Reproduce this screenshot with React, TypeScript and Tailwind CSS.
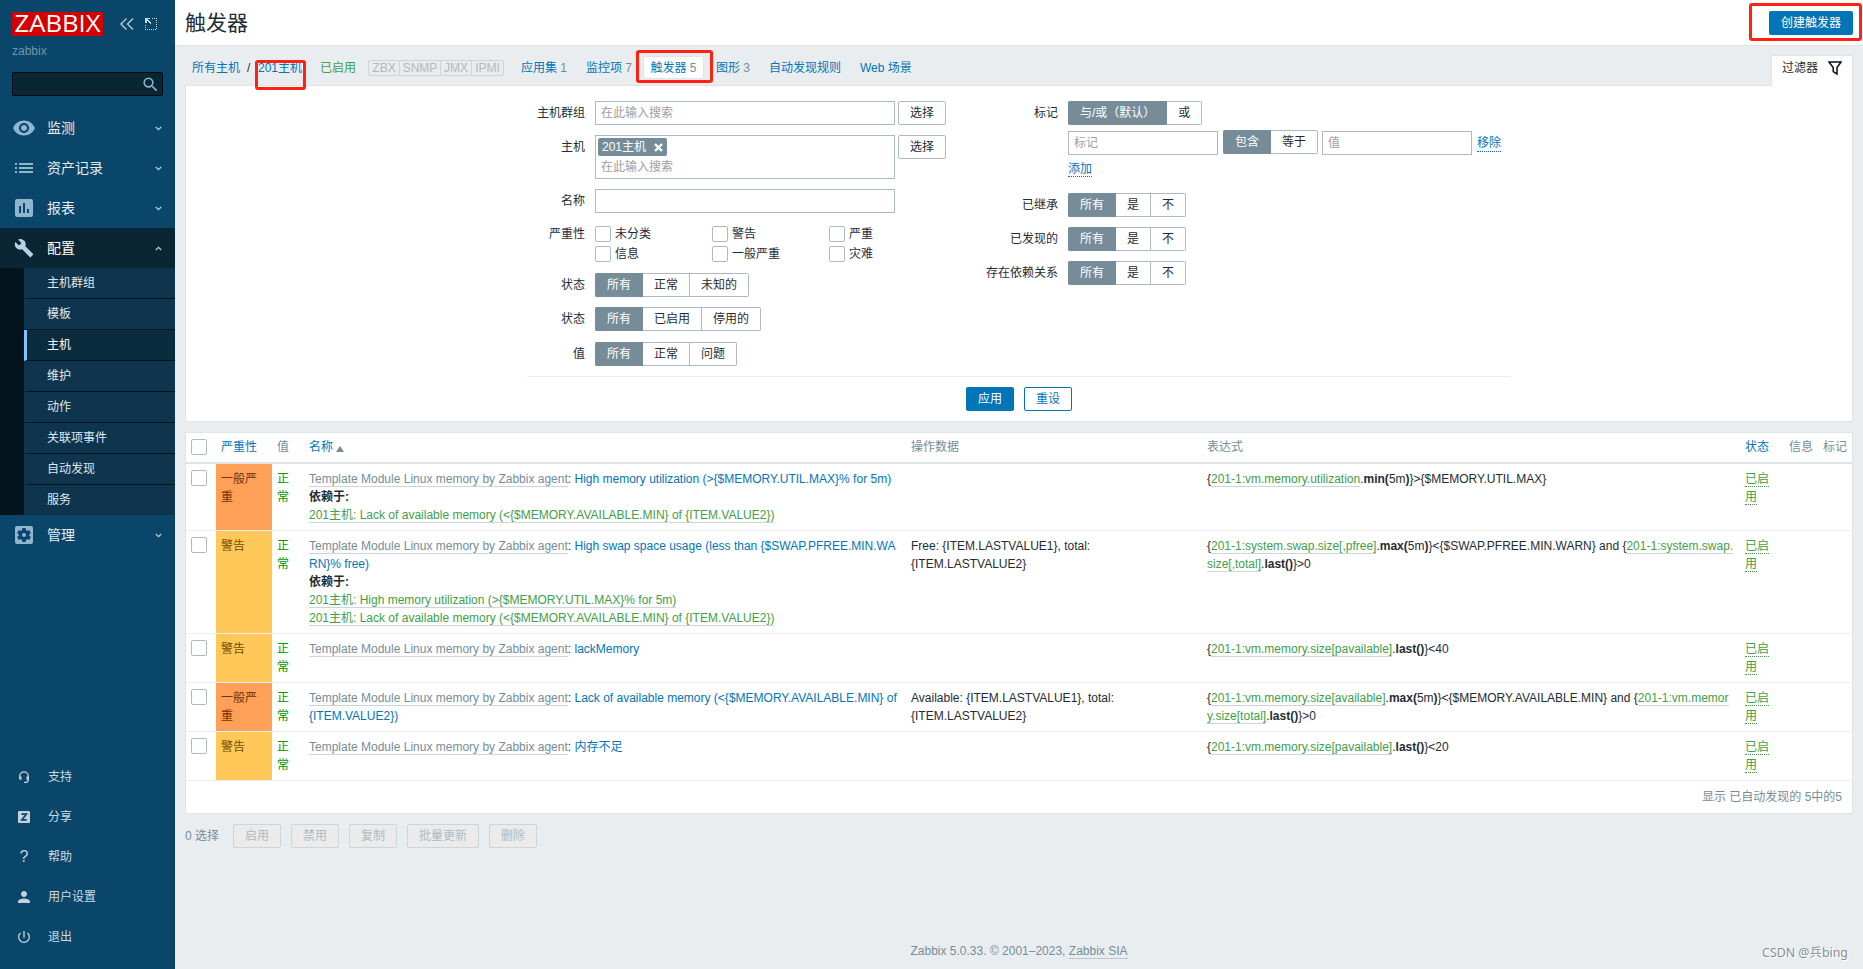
import React from 'react';
import clsx from 'clsx';
import {
  MdBuild,
  MdInsertChart,
  MdList,
  MdPerson,
  MdPowerSettingsNew,
  MdSearch,
  MdSettingsApplications,
  MdVisibility,
} from 'react-icons/md';

const submenu = ['主机群组', '模板', '主机', '维护', '动作', '关联项事件', '自动发现', '服务'];

const Chevron: React.FC<{ up?: boolean }> = ({ up }) => (
  <svg width="7" height="5" viewBox="0 0 7 5" fill="none" stroke="currentColor" strokeWidth="1.2">
    <path d={up ? 'M0.8 4 3.5 1.3 6.2 4' : 'M0.8 1 3.5 3.7 6.2 1'} />
  </svg>
);

const MenuItem: React.FC<{ icon: React.ReactNode; label: string; active?: boolean }> = ({ icon, label, active }) => (
  <div
    className={clsx(
      'flex h-10 items-center pl-3 pr-[13px] text-sm',
      active ? 'bg-[#0a2635] text-white' : 'text-[#e3edf3]'
    )}
  >
    <span className={clsx('flex w-[35px] items-center', active ? 'text-[#b4d3e8]' : 'text-[#8fb5cf]')}>{icon}</span>
    <span className="flex-1">{label}</span>
    <span className="text-[#b9d0de]">
      <Chevron up={active} />
    </span>
  </div>
);

const FootItem: React.FC<{ icon: React.ReactNode; label: string }> = ({ icon, label }) => (
  <div className="flex h-10 items-center pl-[14px] text-[#cbdbe4]">
    <span className="mr-[14px] flex w-5 items-center justify-center text-[#c0d2dd]">{icon}</span>
    {label}
  </div>
);

const Sidebar: React.FC = () => (
  <aside className="flex h-full w-[175px] shrink-0 flex-col bg-[#0a466a]">
    <div className="flex h-6 mt-3 ml-3 items-center">
      <svg className="overflow-visible" width="91" height="24" viewBox="0 0 91 24">
        <rect width="91" height="24" fill="#d40000" />
        <text
          x="2.5"
          y="20.3"
          fill="#fff"
          fontFamily="'Open Sans', sans-serif"
          fontSize="24"
          textLength="86"
          lengthAdjust="spacingAndGlyphs"
        >
          ZABBIX
        </text>
      </svg>
      <svg className="ml-[17px]" width="14" height="12" viewBox="0 0 14 12" fill="none" stroke="#b5cddb" strokeWidth="1.4">
        <path d="M6.5 0.5 1 6l5.5 5.5M13 0.5 7.5 6l5.5 5.5" />
      </svg>
      <svg className="ml-[11px]" width="12" height="12" viewBox="0 0 12 12" fill="#c5d8e3" shapeRendering="crispEdges">
        <path d="M7 .5h5M11.5 2v10M0 11.5h12M.5 7v5" fill="none" stroke="#c5d8e3" strokeDasharray="1 1" />
        <path d="M0 0h5v1H3v1h1v1h1v1h1v2H5V5H4V4H3V3H2v2H0z" />
      </svg>
    </div>
    <div className="ml-3 mt-[6px] h-[18px] text-[#7295aa] leading-[18px]">zabbix</div>
    <div className="mx-3 mt-3 flex h-6 w-[151px] items-center justify-end rounded-xs border border-black/70 bg-[#0a2635] pr-[2px] text-[#8fb0c4]">
      <MdSearch size={19} />
    </div>

    <nav className="mt-3">
      <MenuItem icon={<MdVisibility size={24} />} label="监测" />
      <MenuItem icon={<MdList size={24} />} label="资产记录" />
      <MenuItem icon={<MdInsertChart size={24} />} label="报表" />
      <MenuItem icon={<MdBuild size={20} className="ml-[2px]" />} label="配置" active />
      <ul className="bg-[#04141d] pl-6">
        {submenu.map((label, i) => (
          <li
            key={label}
            className={clsx(
              'flex items-center pl-[20px] border-l-3',
              i === submenu.length - 1 ? 'h-[30px]' : 'h-[31px] border-b border-b-[#04141d]',
              label === '主机' ? 'border-l-[#7fc4ff] bg-[#0a2c3f] text-white' : 'border-l-[#0f344d] bg-[#0f344d] text-[#dfe9ef]'
            )}
          >
            {label}
          </li>
        ))}
      </ul>
      <MenuItem icon={<MdSettingsApplications size={24} />} label="管理" />
    </nav>

    <div className="mt-auto mb-3">
      <FootItem
        icon={
          <svg width="12" height="12" viewBox="0 0 12 12" fill="none" stroke="currentColor" strokeWidth="1.3">
            <path d="M1.7 7V5.2a4.3 4.3 0 0 1 8.6 0V9.5L8.8 11.3H6" />
            <path d="M2.4 5.4v3.4M9.6 5.4v3.4" strokeWidth="2.2" />
          </svg>
        }
        label="支持"
      />
      <FootItem
        icon={
          <svg width="12" height="12" viewBox="0 0 12 12">
            <rect width="12" height="12" rx="1" fill="currentColor" />
            <path d="M3.5 3.1h5L3.7 8.9h5" fill="none" stroke="#0a466a" strokeWidth="1.6" />
          </svg>
        }
        label="分享"
      />
      <FootItem icon={<span className="text-[16px] leading-none">?</span>} label="帮助" />
      <FootItem icon={<MdPerson size={18} />} label="用户设置" />
      <FootItem icon={<MdPowerSettingsNew size={16} />} label="退出" />
    </div>
  </aside>
);

const TabLink: React.FC<{ label: string; count?: number; className?: string }> = ({ label, count, className }) => (
  <span className={clsx('whitespace-nowrap text-[#0275b8]', className)}>
    {label}
    {count !== undefined && <span className="text-[#768d99]"> {count}</span>}
  </span>
);

const HostNav: React.FC = () => (
  <div className="flex h-[39px] items-start pl-[7px]">
    <div className="mt-[11px] flex h-[21px] items-center">
      <TabLink label="所有主机" className="w-[55px]" />
      <span className="w-[11px]">/</span>
      <span className="relative w-[62px]">
        <TabLink label="201主机" />
        <span className="absolute -left-[3px] top-px h-[30px] w-[51px] rounded-[3px] border-3 border-[#ff2213]" />
      </span>
      <span className="w-12 text-[#429e47]">已启用</span>
      <span className="flex h-4 w-[153px] text-[#acbbc2]">
        <span className="flex w-8 items-center justify-center rounded-l-xs border border-[#ccd5d9] bg-[#ebebeb]">ZBX</span>
        <span className="flex w-[41px] items-center justify-center border-y border-r border-[#ccd5d9] bg-[#ebebeb]">SNMP</span>
        <span className="flex w-[31px] items-center justify-center border-y border-r border-[#ccd5d9] bg-[#ebebeb]">JMX</span>
        <span className="flex w-8 items-center justify-center rounded-r-xs border-y border-r border-[#ccd5d9] bg-[#ebebeb]">IPMI</span>
      </span>
      <TabLink label="应用集" count={1} className="w-[65px]" />
      <TabLink label="监控项" count={7} className="w-[58px]" />
      <span className="relative flex h-[21px] w-[59px] items-center justify-center rounded-xs bg-white shadow-[0_0_1px_1px_#dfe4e7]">
        <TabLink label="触发器" count={5} />
        <span className="absolute -left-[8px] -top-[7px] h-[33px] w-[77px] rounded-[3px] border-3 border-[#ff2213]" />
      </span>
      <TabLink label="图形" count={3} className="ml-[13px] w-[53px]" />
      <TabLink label="自动发现规则" className="w-[91px]" />
      <TabLink label="Web 场景" />
    </div>
    {/* Filter tab overlaps the panel border below */}
    <div className="relative z-10 mt-[9px] ml-auto flex h-[31px] w-[82px] items-center border border-b-0 border-[#dfe4e7] bg-white pl-[10px] pb-[6px]">
      过滤器
      <svg className="ml-[10px]" width="14" height="14" viewBox="0 0 14 14" fill="none" stroke="#111" strokeWidth="1.5">
        <path d="M1 1h12L9 6.6V13L5.2 10.6V6.6z" />
      </svg>
    </div>
  </div>
);

const FieldRow: React.FC<{ label: string; className?: string; children: React.ReactNode }> = ({
  label,
  className,
  children,
}) => (
  <div className={clsx('flex items-start', className)}>
    <div className="mr-[10px] flex h-6 w-[104px] items-center justify-end">{label}</div>
    {children}
  </div>
);

const Segmented: React.FC<{ options: string[]; className?: string }> = ({ options, className }) => (
  <div className={clsx('flex h-6', className)}>
    {options.map((option, i) => (
      <span
        key={option}
        className={clsx(
          'flex items-center border-y whitespace-nowrap',
          i === 0
            ? 'rounded-l-xs border-l border-[#768d99] bg-[#768d99] pl-[11px] pr-3 text-white'
            : 'border-r border-[#acbbc2] bg-white pl-[11px] pr-[11px]',
          i === options.length - 1 && 'rounded-r-xs'
        )}
      >
        {option}
      </span>
    ))}
  </div>
);

const SelectButton: React.FC = () => (
  <span className="ml-[3px] flex h-6 w-12 items-center justify-center rounded-xs border border-[#acbbc2]">选择</span>
);

const Checkbox: React.FC = () => (
  <span className="block h-4 w-4 shrink-0 rounded-xs border border-[#acbbc2] bg-white" />
);

const Filter: React.FC = () => (
  <section className="h-[337px] border border-[#dfe4e7] bg-white pt-[15px]">
    <div className="ml-[295px] flex h-[265px]">
      <div className="w-[473px]">
        <FieldRow label="主机群组">
          <div className="flex h-6 w-[300px] items-center border border-[#acbbc2] pl-[5px] text-[#a0a0a0]">在此输入搜索</div>
          <SelectButton />
        </FieldRow>
        <FieldRow label="主机" className="mt-[10px]">
          <div className="h-11 w-[300px] border border-[#acbbc2] pt-[2px] pl-[2px]">
            <div className="flex h-[18px] w-[69px] items-center rounded-xs bg-[#768d99] pl-1 text-white">
              201主机
              <svg className="ml-[8px]" width="9" height="9" viewBox="0 0 9 9" stroke="#fff" strokeWidth="2.4">
                <path d="M1 1l7 7M8 1 1 8" />
              </svg>
            </div>
            <div className="pl-[3px] text-[#a0a0a0] leading-[22px]">在此输入搜索</div>
          </div>
          <SelectButton />
        </FieldRow>
        <FieldRow label="名称" className="mt-[10px]">
          <div className="h-6 w-[300px] border border-[#acbbc2]" />
        </FieldRow>
        <FieldRow label="严重性" className="mt-[9px]">
          <div className="mt-[2px] grid grid-cols-[117px_117px_117px]">
            {['未分类', '警告', '严重', '信息', '一般严重', '灾难'].map((name) => (
              <span key={name} className="flex h-5 items-center gap-1">
                <Checkbox />
                {name}
              </span>
            ))}
          </div>
        </FieldRow>
        <FieldRow label="状态" className="mt-[9px]">
          <Segmented options={['所有', '正常', '未知的']} />
        </FieldRow>
        <FieldRow label="状态" className="mt-[10px]">
          <Segmented options={['所有', '已启用', '停用的']} />
        </FieldRow>
        <FieldRow label="值" className="mt-[11px]">
          <Segmented options={['所有', '正常', '问题']} />
        </FieldRow>
      </div>

      <div>
        <FieldRow label="标记">
          <div>
            <Segmented options={['与/或（默认）', '或']} />
            <div className="mt-[5px] flex h-[25px] items-end">
              <span className="flex h-6 w-[150px] items-center border border-[#acbbc2] pl-[5px] text-[#a0a0a0]">标记</span>
              <Segmented options={['包含', '等于']} className="ml-[5px] mb-px" />
              <span className="ml-[4px] flex h-6 w-[150px] items-center border border-[#acbbc2] pl-[5px] text-[#a0a0a0]">值</span>
              <span className="mb-[3px] ml-[5px] border-b border-dotted border-[#0275b8] leading-[15px] text-[#0275b8]">移除</span>
            </div>
            <div className="mt-[5px] h-[33px]">
              <span className="border-b border-dotted border-[#0275b8] leading-[18px] text-[#0275b8]">添加</span>
            </div>
          </div>
        </FieldRow>
        <FieldRow label="已继承">
          <Segmented options={['所有', '是', '不']} />
        </FieldRow>
        <FieldRow label="已发现的" className="mt-[10px]">
          <Segmented options={['所有', '是', '不']} />
        </FieldRow>
        <FieldRow label="存在依赖关系" className="mt-[10px]">
          <Segmented options={['所有', '是', '不']} />
        </FieldRow>
      </div>
    </div>
    <div className="mx-auto mt-[10px] flex w-[984px] justify-center gap-[10px] border-t border-[#ebeef0] pt-[10px]">
      <span className="flex h-6 w-12 items-center justify-center rounded-xs bg-[#0275b8] text-white">应用</span>
      <span className="flex h-6 w-12 items-center justify-center rounded-xs border border-[#0275b8] text-[#0275b8]">重设</span>
    </div>
  </section>
);

const Green: React.FC<{ children: React.ReactNode }> = ({ children }) => (
  <span className="border-b border-[#ccd5d9] text-[#429e47]">{children}</span>
);

interface Trigger {
  severity: '一般严重' | '警告';
  name: React.ReactNode;
  dependsOn?: string[];
  data?: React.ReactNode;
  expression: React.ReactNode;
}

const triggers: Trigger[] = [
  {
    severity: '一般严重',
    name: 'High memory utilization (>{$MEMORY.UTIL.MAX}% for 5m)',
    dependsOn: ['201主机: Lack of available memory (<{$MEMORY.AVAILABLE.MIN} of {ITEM.VALUE2})'],
    expression: (
      <>
        {'{'}<Green>201-1:vm.memory.utilization</Green>.<b>min(</b>5m<b>)</b>{'}>{$MEMORY.UTIL.MAX}'}
      </>
    ),
  },
  {
    severity: '警告',
    name: <>{'High swap space usage (less than {$SWAP.PFREE.MIN.WA'}<br />{'RN}% free)'}</>,
    dependsOn: [
      '201主机: High memory utilization (>{$MEMORY.UTIL.MAX}% for 5m)',
      '201主机: Lack of available memory (<{$MEMORY.AVAILABLE.MIN} of {ITEM.VALUE2})',
    ],
    data: <>{'Free: {ITEM.LASTVALUE1}, total:'}<br />{'{ITEM.LASTVALUE2}'}</>,
    expression: (
      <>
        {'{'}<Green>201-1:system.swap.size[,pfree]</Green>.<b>max(</b>5m<b>)</b>
        {'}<{$SWAP.PFREE.MIN.WARN} and {'}<Green>201-1:system.swap.<br />size[,total]</Green>.<b>last()</b>{'}>0'}
      </>
    ),
  },
  {
    severity: '警告',
    name: 'lackMemory',
    expression: <>{'{'}<Green>201-1:vm.memory.size[pavailable]</Green>.<b>last()</b>{'}<40'}</>,
  },
  {
    severity: '一般严重',
    name: <>{'Lack of available memory (<{$MEMORY.AVAILABLE.MIN} of'}<br />{'{ITEM.VALUE2})'}</>,
    data: <>{'Available: {ITEM.LASTVALUE1}, total:'}<br />{'{ITEM.LASTVALUE2}'}</>,
    expression: (
      <>
        {'{'}<Green>201-1:vm.memory.size[available]</Green>.<b>max(</b>5m<b>)</b>
        {'}<{$MEMORY.AVAILABLE.MIN} and {'}<Green>201-1:vm.memor<br />y.size[total]</Green>.<b>last()</b>{'}>0'}
      </>
    ),
  },
  {
    severity: '警告',
    name: '内存不足',
    expression: <>{'{'}<Green>201-1:vm.memory.size[pavailable]</Green>.<b>last()</b>{'}<20'}</>,
  },
];

const columns = 'grid grid-cols-[30px_56px_32px_602px_296px_538px_44px_34px_34px]';

const TriggerRow: React.FC<{ trigger: Trigger }> = ({ trigger }) => (
  <div className={clsx(columns, 'border-b border-[#ebeef0] leading-[18px] whitespace-nowrap *:py-[6px] *:pl-[5px]')}>
    <div>
      <Checkbox />
    </div>
    <div
      className={clsx(
        'pr-[5px] whitespace-normal',
        trigger.severity === '警告' ? 'bg-[#ffc859] text-[#734d00]' : 'bg-[#ffa059] text-[#733100]'
      )}
    >
      {trigger.severity}
    </div>
    <div className="text-[#009900]">正<br />常</div>
    <div>
      <span className="border-b border-[#ccd5d9] text-[#768d99]">Template Module Linux memory by Zabbix agent</span>
      {': '}
      <span className="text-[#0275b8]">{trigger.name}</span>
      {trigger.dependsOn && (
        <>
          <div className="font-bold">依赖于:</div>
          {trigger.dependsOn.map((dep) => (
            <div key={dep}>
              <Green>{dep}</Green>
            </div>
          ))}
        </>
      )}
    </div>
    <div>{trigger.data}</div>
    <div>{trigger.expression}</div>
    <div>
      <span className="border-b border-dotted border-[#429e47] text-[#429e47]">已启<br />用</span>
    </div>
    <div />
    <div />
  </div>
);

const TriggerTable: React.FC = () => (
  <section className="mt-[10px] border border-[#dfe4e7] bg-white">
    <div className={clsx(columns, 'h-[31px] items-center border-b-2 border-[#dfe4e7] pb-px text-[#768d99] *:pl-[5px]')}>
      <span>
        <Checkbox />
      </span>
      <span className="text-[#0275b8]">严重性</span>
      <span>值</span>
      <span className="flex items-center text-[#0275b8]">
        名称
        <svg className="ml-[3px] mt-[3px]" width="8" height="6" viewBox="0 0 8 6" fill="#768d99">
          <path d="M4 0 8 6H0z" />
        </svg>
      </span>
      <span>操作数据</span>
      <span>表达式</span>
      <span className="text-[#0275b8]">状态</span>
      <span>信息</span>
      <span>标记</span>
    </div>
    {triggers.map((trigger, i) => (
      <TriggerRow key={i} trigger={trigger} />
    ))}
    <div className="flex h-8 items-center justify-end pr-[10px] text-[#768d99]">显示 已自动发现的 5中的5</div>
  </section>
);

const actions = ['启用', '禁用', '复制', '批量更新', '删除'];

const App: React.FC = () => (
  <div className="flex h-[969px] w-[1863px] overflow-hidden bg-[#e9edf0] font-['Liberation_Sans','Noto_Sans_CJK_SC',sans-serif] text-[12px] leading-[18px] text-[#1f2c33]">
    <Sidebar />
    <main className="flex flex-1 flex-col">
      <header className="flex h-[46px] items-center justify-between border-b border-[#dfe4e7] bg-white px-[10px]">
        <h1 className="text-[21px] leading-6">触发器</h1>
        <div className="relative">
          <span className="flex h-6 w-[84px] items-center justify-center rounded-xs bg-[#0275b8] text-white">创建触发器</span>
          <span className="absolute -left-[20px] -top-[8px] h-[38px] w-[113px] rounded-[3px] border-3 border-[#ff2213]" />
        </div>
      </header>

      <div className="flex flex-1 flex-col pl-[10px] pr-[10px]">
        <HostNav />
        <Filter />
        <TriggerTable />
        <div className="mt-[10px] flex items-center gap-[10px] text-[#768d99]">
          <span className="w-[38px]">0 选择</span>
          {actions.map((action) => (
            <span
              key={action}
              className="flex h-6 items-center rounded-xs border border-[#ccd5d9] bg-[#ebebeb] px-[11px] text-[#acbbc2]"
            >
              {action}
            </span>
          ))}
        </div>
        <footer className="relative mt-auto mb-[9px] text-center text-[#768d99]">
          Zabbix 5.0.33. © 2001–2023, <span className="border-b border-[#b9c5cc]">Zabbix SIA</span>
          <span className="absolute right-[5px] top-[2px] font-['Noto_Sans','Noto_Sans_CJK_SC',sans-serif] text-[12.4px] text-[#8b8f92] [text-shadow:1px_1px_0_#fff]">
            CSDN @兵bing
          </span>
        </footer>
      </div>
    </main>
  </div>
);

export default App;
